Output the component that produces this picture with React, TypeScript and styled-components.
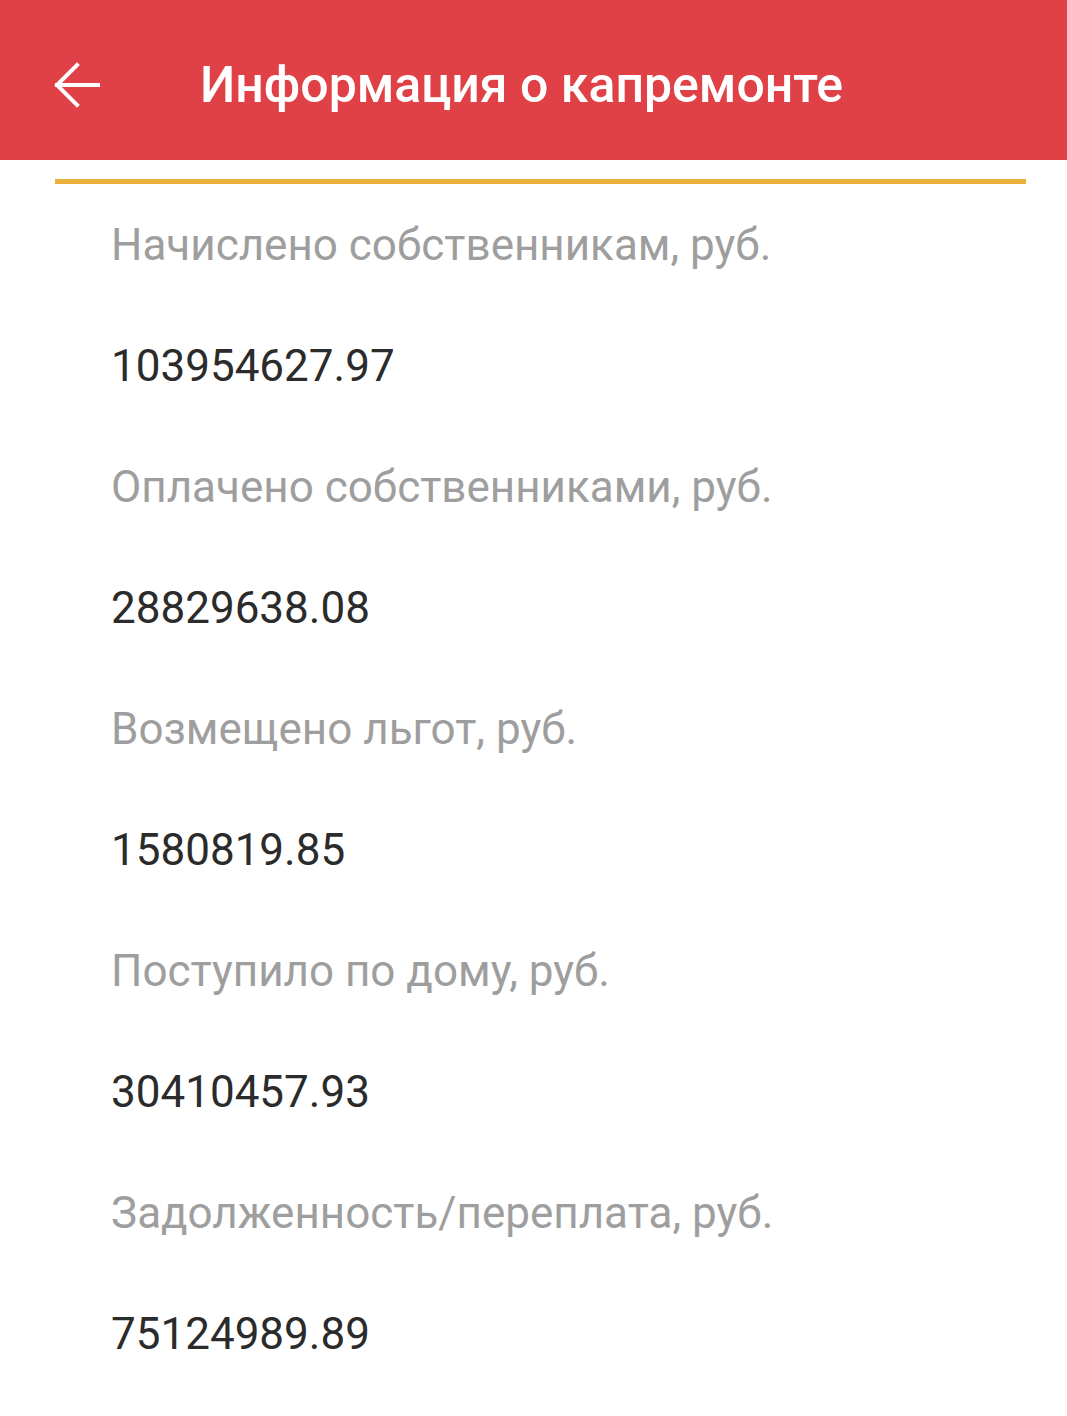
import { ReactElement } from 'react'
import styled, { createGlobalStyle } from 'styled-components'

const GlobalStyle = createGlobalStyle`
  html, body {
    margin: 0;
    padding: 0;
    background: #ffffff;
  }
  body {
    font-family: Roboto, 'Noto Sans', sans-serif;
  }
`

const items = [
  { label: 'Начислено собственникам, руб.', value: '103954627.97' },
  { label: 'Оплачено собственниками, руб.', value: '28829638.08' },
  { label: 'Возмещено льгот, руб.', value: '1580819.85' },
  { label: 'Поступило по дому, руб.', value: '30410457.93' },
  { label: 'Задолженность/переплата, руб.', value: '75124989.89' },
]

function App(): ReactElement {
  return (
    <Page>
      <GlobalStyle />
      <Toolbar>
        <BackButton aria-label="Назад">
          <svg width="48" height="48" viewBox="0 0 48 48" fill="none">
            <path
              d="M45 24H4M24 4L4 24L24 44"
              stroke="#ffffff"
              strokeWidth="4"
              strokeLinecap="square"
              strokeLinejoin="miter"
            />
          </svg>
        </BackButton>
        <Title>Информация о капремонте</Title>
      </Toolbar>
      <Content>
        <Accent />
        <List>
          {items.map((item) => (
            <div key={item.label}>
              <Cell muted>{item.label}</Cell>
              <Cell>{item.value}</Cell>
            </div>
          ))}
        </List>
      </Content>
    </Page>
  )
}

export default App

const Page = styled.div`
  width: 1067px;
  min-height: 1416px;
  background: #ffffff;
`

const Toolbar = styled.header`
  display: flex;
  align-items: center;
  height: 160px;
  background: #e04146;
  padding: 10px 0 0 53px;
  box-sizing: border-box;
`

const BackButton = styled.button`
  display: flex;
  align-items: center;
  justify-content: center;
  width: 48px;
  height: 48px;
  padding: 0;
  border: none;
  background: transparent;
  margin-right: 99px;
`

const Title = styled.h1`
  margin: 0;
  color: #ffffff;
  font-size: 50px;
  font-weight: 500;
  letter-spacing: 0;
`

const Content = styled.main`
  padding: 19px 41px 0 55px;
`

const Accent = styled.div`
  height: 5px;
  background: #ebb13c;
`

const List = styled.div`
  padding-left: 56px;
`

const Cell = styled.div<{ muted?: boolean }>`
  display: flex;
  align-items: center;
  height: 121px;
  font-size: 44px;
  color: ${(p) => (p.muted ? '#9e9e9e' : '#2b2b2b')};
`
